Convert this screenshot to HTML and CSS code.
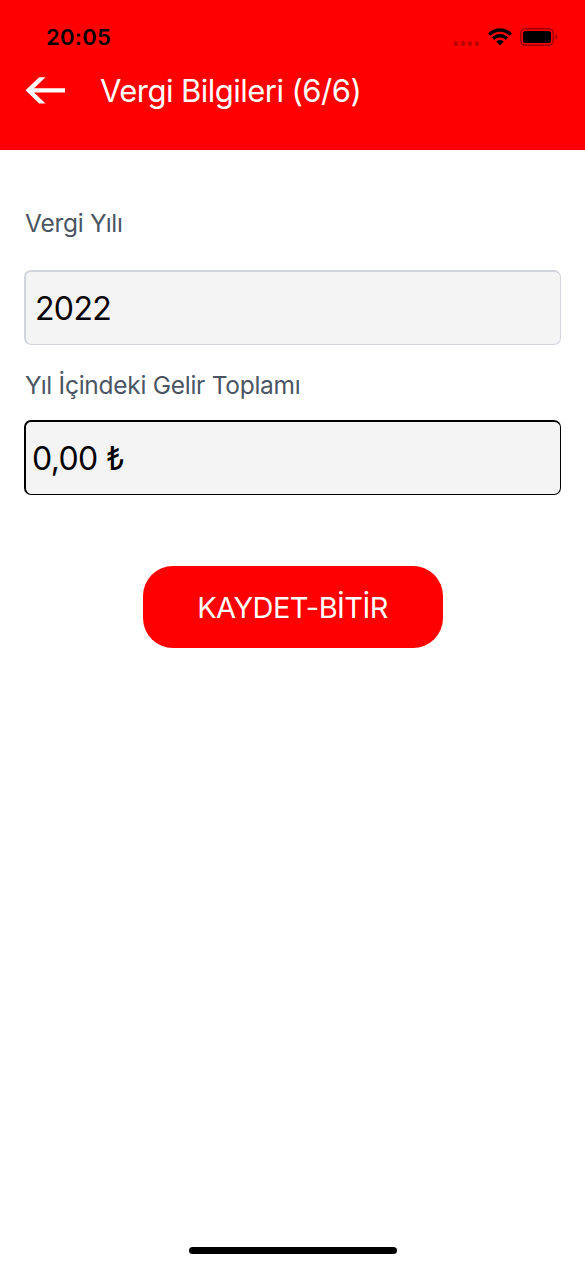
FILE: index.html
```html
<!DOCTYPE html>
<html lang="tr">
<head>
  <meta charset="UTF-8">
  <meta name="viewport" content="width=device-width,initial-scale=1.0">
  <title>Vergi Bilgileri</title>
  <link rel="stylesheet" href="styles.css">
</head>
<body>

  <header class="header">
    <div class="statusbar">
      <span class="time">20:05</span>
      <div class="status-icons">
        <div class="signal"><i></i><i></i><i></i><i></i></div>
        <svg class="wifi" width="24" height="18" viewBox="0 0 24 18">
          <path d="M0 5.4C6.8-1.6 17.2-1.6 24 5.4L21.7 7.8C16.3 2.4 7.7 2.4 2.3 7.8Z"/>
          <path d="M4 9.5C8.5 4.9 15.5 4.9 20 9.5L17.6 11.9C14.4 8.8 9.6 8.8 6.4 11.9Z"/>
          <path d="M8.1 13.6C10.3 11.5 13.7 11.5 15.9 13.6L12 17.6Z"/>
        </svg>
        <svg class="battery" width="38" height="18" viewBox="0 0 38 18">
          <rect x=".8" y=".8" width="32.4" height="16.4" rx="4.6" fill="none" stroke="#000" stroke-opacity=".4" stroke-width="1.5"/>
          <rect x="3" y="3" width="28" height="12" rx="2.5"/>
          <path d="M35.6 6.2C37.8 7.2 37.8 10.8 35.6 11.8Z" fill-opacity=".45"/>
        </svg>
      </div>
    </div>
    <div class="navbar">
      <a class="back" href="#" aria-label="Geri">
        <svg width="40" height="28" viewBox="0 0 40 28">
          <path d="M.5 14.300L14.200 1.200H20.500L9 12.200H40V16.400H9L20.500 27.400H14.200Z" fill="#fff"/>
        </svg>
      </a>
      <h1>Vergi Bilgileri (6/6)</h1>
    </div>
  </header>

  <form class="form">
    <label class="label" for="year">Vergi Yılı</label>
    <input class="field field-year" id="year" type="text" value="2022">
    <label class="label label-total" for="total">Yıl İçindeki Gelir Toplamı</label>
    <input class="field field-total" id="total" type="text" value="0,00 ₺">
    <button class="save" type="button">KAYDET-BİTİR</button>
  </form>

  <div class="home-bar"></div>

</body>
</html>
```

FILE: styles.css
```css
:root{
  --red:#ff0000;
  --label:#4b5563;
  --border:#d1d5db;
  --field-bg:#f4f4f4;
}
*{box-sizing:border-box;margin:0;padding:0}
body{
  min-height:100vh;
  display:flex;
  flex-direction:column;
  background:#fff;
  font-family:Inter,"Noto Sans",sans-serif;
  color:#000;
}
/* header */
.header{
  height:150px;
  padding-top:23px;
  background:var(--red);
}
.statusbar{
  height:28px;
  display:flex;
  align-items:center;
  justify-content:space-between;
  padding:0 27px 0 46px;
}
.time{
  font-size:22px;
  font-weight:600;
  letter-spacing:.3px;
}
.status-icons{
  display:flex;
  align-items:center;
}
.signal{
  display:flex;
  gap:3px;
  margin:12px 9px 0 0;
}
.signal i{
  width:4px;
  height:5px;
  border-radius:1.5px;
  background:rgba(0,0,0,.25);
}
.wifi{margin-right:8px}
.navbar{
  height:78px;
  display:flex;
  align-items:center;
  padding:0 25px;
}
.back{
  display:flex;
  margin-right:35px;
}
h1{
  font-size:31px;
  font-weight:400;
  line-height:40px;
  letter-spacing:-.53px;
  color:#fff;
  padding-top:1px;
}
/* form */
.form{
  flex:1;
  display:flex;
  flex-direction:column;
  padding:58px 24px 0;
}
.label{
  font-size:24.5px;
  line-height:30px;
  letter-spacing:-.27px;
  color:var(--label);
  padding-left:1px;
}
.label-total{margin-top:25px}
.field{
  width:100%;
  height:75px;
  border:solid var(--border);
  border-width:2px 1px 1px 2px;
  border-radius:7px;
  background:var(--field-bg);
  font:400 32px Inter,"Noto Sans",sans-serif;
  letter-spacing:-.65px;
  color:#000;
  outline:none;
}
.field-year{
  margin-top:32px;
  padding-left:9px;
}
.field-total{
  margin-top:20px;
  padding-left:6px;
  border-color:#000;
}
.save{
  align-self:center;
  width:300px;
  height:82px;
  margin-top:71px;
  border:none;
  border-radius:30px;
  background:var(--red);
  font:400 29px Inter,"Noto Sans",sans-serif;
  letter-spacing:-.55px;
  color:#fff;
  cursor:pointer;
}
/* home indicator */
.home-bar{
  width:208px;
  height:7px;
  margin:0 auto 12px;
  border-radius:4px;
  background:#000;
}
```
